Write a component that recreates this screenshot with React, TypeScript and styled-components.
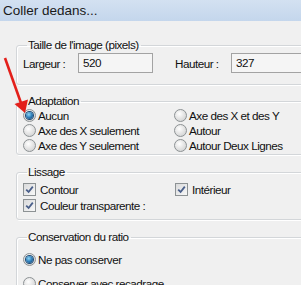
import React from "react";
import styled, { createGlobalStyle } from "styled-components";

const Global = createGlobalStyle`
  html, body { margin: 0; padding: 0; background: #f0f0f0; }
  body {
    font-family: "Liberation Sans", Arial, sans-serif;
    font-size: 11.7px;
    letter-spacing: -0.5px;
    color: #111;
    overflow: hidden;
  }
`;

const Window = styled.div`
  position: relative;
  width: 301px;
  height: 285px;
  overflow: hidden;
  background: #f0f0f0;
`;

const TitleBar = styled.div`
  height: 21px;
  display: flex;
  align-items: center;
  padding-left: 3px;
  background: linear-gradient(#d3e1f1, #c4d6ec);
  color: #1a1a1a;
  font-size: 13.5px;
  letter-spacing: 0;
`;

const Content = styled.div`
  display: flex;
  flex-direction: column;
  padding: 17px 0 0 16px;
  width: 320px;
`;

const Group = styled.fieldset<{ $pt: number; $pb: number; $mb: number }>`
  margin: 0 0 ${(p) => p.$mb}px 0;
  padding: ${(p) => p.$pt}px 6px ${(p) => p.$pb}px 6px;
  border: 1px solid #d3d6d9;
  border-radius: 3px;
  box-shadow: inset 1px 1px 0 #fff, 1px 1px 0 #fff;
  min-width: 0;
`;

const Legend = styled.legend`
  margin-left: 4px;
  padding: 0 2px 0 1px;
  line-height: 14px;
  height: 14px;
`;

const SizeRow = styled.div`
  display: flex;
  align-items: center;
  height: 20px;
`;

const Label = styled.span<{ $w: number }>`
  width: ${(p) => p.$w}px;
  flex: none;
`;

const Input = styled.div<{ $w: number }>`
  box-sizing: border-box;
  width: ${(p) => p.$w}px;
  height: 20px;
  border: 1px solid #a3a3a3;
  background: #f5f5f5;
  padding: 1px 0 0 4px;
  line-height: 16px;
  flex: none;
`;

const Grid = styled.div<{ $col: number; $row: number; $rows: number }>`
  display: grid;
  grid-template-columns: ${(p) => p.$col}px auto;
  grid-template-rows: repeat(${(p) => p.$rows}, ${(p) => p.$row}px);
  grid-auto-flow: column;
`;

const Stack = styled.div<{ $row: number }>`
  display: grid;
  grid-auto-rows: ${(p) => p.$row}px;
`;

const Option = styled.label<{ $gap: number }>`
  display: flex;
  align-items: center;
  gap: ${(p) => p.$gap}px;
  white-space: nowrap;
`;

const RadioDot = styled.span<{ $on?: boolean }>`
  box-sizing: border-box;
  width: 13px;
  height: 13px;
  border-radius: 50%;
  border: 1px solid #8d9294;
  background: radial-gradient(circle at 40% 35%, #ffffff 0%, #e6e6e6 45%, #c9cbcc 100%);
  display: flex;
  align-items: center;
  justify-content: center;
  flex: none;
  &::after {
    content: "";
    display: ${(p) => (p.$on ? "block" : "none")};
    width: 7px;
    height: 7px;
    border-radius: 50%;
    background: radial-gradient(circle at 40% 35%, #8fd6f6 0%, #2d7db8 50%, #123a66 100%);
    box-shadow: 0 0 0 1px #1b4a74;
  }
`;

const CheckBox = styled.span`
  box-sizing: border-box;
  width: 13px;
  height: 13px;
  border: 1px solid #8d9294;
  background: linear-gradient(135deg, #d9dadb, #f8f8f8);
  display: flex;
  align-items: center;
  justify-content: center;
  flex: none;
`;

const Arrow = styled.svg`
  position: absolute;
  left: 0;
  top: 0;
  pointer-events: none;
`;

const Radio = ({ on, children }: { on?: boolean; children: React.ReactNode }) => (
  <Option $gap={2}>
    <RadioDot $on={on} />
    <span>{children}</span>
  </Option>
);

const Check = ({ children }: { children: React.ReactNode }) => (
  <Option $gap={4}>
    <CheckBox>
      <svg width="9" height="9" viewBox="0 0 9 9">
        <path d="M1.2 4.6 L3.6 7 L7.8 1.6" fill="none" stroke="#4a5f8a" strokeWidth="1.8" />
      </svg>
    </CheckBox>
    <span>{children}</span>
  </Option>
);

export default function App() {
  return (
    <>
      <Global />
      <Window>
        <TitleBar>Coller dedans...</TitleBar>
        <Content>
          <Group $pt={1} $pb={11} $mb={9}>
            <Legend>Taille de l'image (pixels)</Legend>
            <SizeRow>
              <Label $w={55}>Largeur :</Label>
              <Input $w={75}>520</Input>
              <Label $w={22} />
              <Label $w={56}>Hauteur :</Label>
              <Input $w={100}>327</Input>
            </SizeRow>
          </Group>
          <Group $pt={0} $pb={1} $mb={10}>
            <Legend>Adaptation</Legend>
            <Grid $col={151} $row={15} $rows={3}>
              <Radio on>Aucun</Radio>
              <Radio>Axe des X seulement</Radio>
              <Radio>Axe des Y seulement</Radio>
              <Radio>Axe des X et des Y</Radio>
              <Radio>Autour</Radio>
              <Radio>Autour Deux Lignes</Radio>
            </Grid>
          </Group>
          <Group $pt={2} $pb={6} $mb={10}>
            <Legend>Lissage</Legend>
            <Grid $col={152} $row={16} $rows={2}>
              <Check>Contour</Check>
              <Check>Couleur transparente :</Check>
              <Check>Intérieur</Check>
            </Grid>
          </Group>
          <Group $pt={3} $pb={20} $mb={0}>
            <Legend>Conservation du ratio</Legend>
            <Stack $row={24}>
              <Radio on>Ne pas conserver</Radio>
              <Radio>Conserver avec recadrage</Radio>
            </Stack>
          </Group>
        </Content>
        <Arrow width="40" height="120" viewBox="0 0 40 120">
          <line x1="5" y1="58" x2="21" y2="103" stroke="#e3201b" strokeWidth="2.6" />
          <polygon points="25,113 14.5,104 28,99.5" fill="#e3201b" />
        </Arrow>
      </Window>
    </>
  );
}
